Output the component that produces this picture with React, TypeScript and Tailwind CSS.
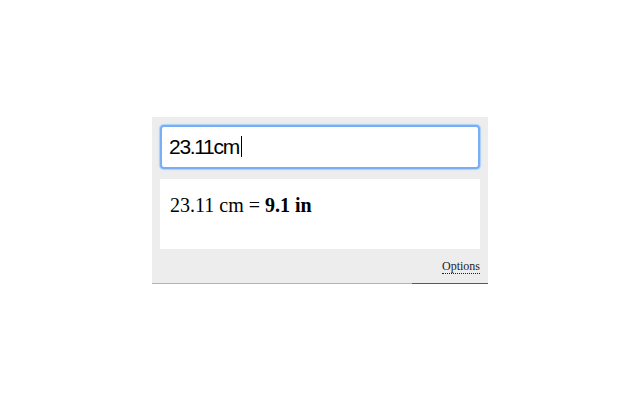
import React from "react";

export default function App() {
  return (
    <div className="w-[640px] h-[400px] bg-white flex items-center justify-center">
      <div className="relative w-[336px] bg-[#ededed] border-b border-[#b4b4b4] flex flex-col px-2 pt-2">
        <div className="h-[44px] bg-white rounded-[4px] border-2 border-[#78aef6] shadow-[0_0_0_1px_#b3d2fa,0_0_2px_1px_#cfe2fb] flex items-center pl-[7px]">
          <span
            className="text-[21px] tracking-[-1.3px] text-black leading-none"
            style={{ fontFamily: '"Liberation Sans", Arial, sans-serif' }}
          >
            23.11cm
          </span>
          <span className="w-px h-[21px] bg-black ml-[2px]" />
        </div>
        <div
          className="mt-[10px] h-[70px] bg-white pl-[10px] pt-[15px] text-[20px] leading-[23px] text-black"
          style={{ fontFamily: '"Liberation Serif", "Times New Roman", serif' }}
        >
          23.11 cm = <b>9.1 in</b>
        </div>
        <div
          className="h-[34px] flex justify-end items-start pt-[11px] text-[12px] text-[#1c1c2a]"
          style={{ fontFamily: '"Liberation Serif", "Times New Roman", serif' }}
        >
          <span className="border-b border-dotted border-[#1c1c2a] leading-[13px]">Options</span>
        </div>
        <div className="absolute right-0 bottom-[-1px] w-[76px] h-px bg-[#5a5a5a]" />
      </div>
    </div>
  );
}
